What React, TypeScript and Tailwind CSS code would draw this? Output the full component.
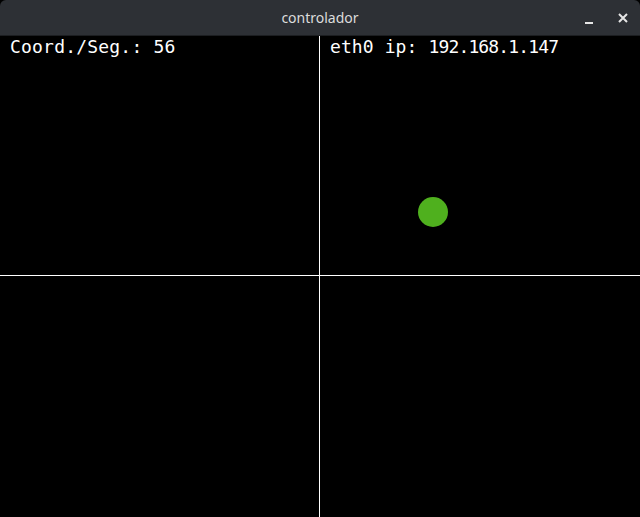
import * as React from 'react';

const mono = { fontFamily: '"DejaVu Sans Mono", "Liberation Mono", monospace' };

const TitleBar: React.FC<{ title: string }> = ({ title }) => (
  <div className="relative flex h-[36px] items-center justify-center rounded-t-[6px] bg-[#2d3035] border-b border-[#1c1e21]">
    <span className="text-[14px] text-[#dcdcdc] font-['Noto_Sans',sans-serif]">{title}</span>
    {/* window buttons */}
    <div className="absolute right-[12px] top-0 flex h-full items-center gap-[24px]">
      <svg width="10" height="10" viewBox="0 0 10 10" className="mt-[4px]">
        <rect x="1" y="7" width="8" height="2" fill="#e6e6e6" />
      </svg>
      <svg width="10" height="10" viewBox="0 0 10 10">
        <path d="M1 1 L9 9 M9 1 L1 9" stroke="#e6e6e6" strokeWidth="2" />
      </svg>
    </div>
  </div>
);

export default function App() {
  return (
    <div className="w-[640px] h-[517px] bg-black flex flex-col overflow-hidden">
      <TitleBar title="controlador" />
      <div className="flex-1 grid grid-cols-[319px_1px_320px] grid-rows-[239px_1px_1fr] bg-black">
        {/* top left */}
        <div className="pl-[10px] pt-[2px] text-white text-[18px] leading-[18px] whitespace-pre tracking-[0.2px]" style={mono}>
          Coord./Seg.: 56
        </div>
        <div className="bg-white" />
        {/* top right */}
        <div className="relative pl-[10px] pt-[2px] text-white text-[18px] leading-[18px] whitespace-pre" style={mono}>
          <span className="tracking-[0.1px]">eth0 ip: </span>
          <span className="tracking-[-0.85px]">192.168.1.147</span>
          <div className="absolute left-[98px] top-[161px] w-[30px] h-[30px] rounded-full bg-[#4fb01e]" />
        </div>
        <div className="bg-white" />
        <div className="bg-white" />
        <div className="bg-white" />
        {/* bottom */}
        <div />
        <div className="bg-white" />
        <div />
      </div>
    </div>
  );
}
